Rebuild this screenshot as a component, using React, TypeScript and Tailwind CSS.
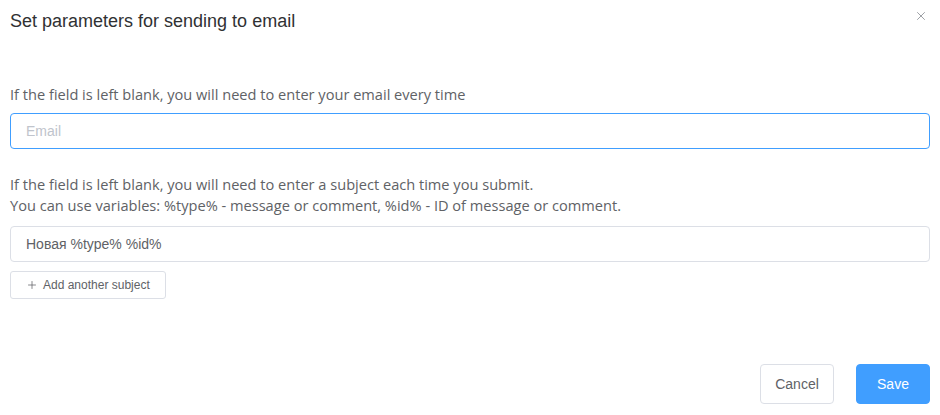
import { X, Plus } from 'lucide-react'

export default function App() {
  return (
    <div className="h-[415px] w-[940px] bg-white font-['Liberation_Sans',Arial,sans-serif]">
      <div className="flex items-start justify-between pl-[10px] pr-[12px] pt-[9px]">
        <h2 className="text-[18px] leading-[24px] text-[#303133]">Set parameters for sending to email</h2>
        <button className="text-[#909399]">
          <X size={14} strokeWidth={1.5} />
        </button>
      </div>

      <div className="px-[10px] pt-[51px]">
        <p className="font-['Open_Sans',sans-serif] text-[14.6px] leading-[20px] text-[#606266]">
          If the field is left blank, you will need to enter your email every time
        </p>
        <input
          className="mt-[9px] h-[36px] w-full rounded-[4px] border border-[#409eff] px-[15px] text-[14px] text-[#606266] outline-none placeholder:text-[#c0c4cc]"
          placeholder="Email"
        />

        <p className="mt-[25px] font-['Open_Sans',sans-serif] text-[14.6px] leading-[21px] text-[#606266]">
          If the field is left blank, you will need to enter a subject each time you submit.
          <br />
          You can use variables: %type% - message or comment, %id% - ID of message or comment.
        </p>
        <input
          className="mt-[10px] h-[36px] w-full rounded-[4px] border border-[#dcdfe6] px-[15px] text-[14px] text-[#606266] outline-none"
          defaultValue="Новая %type% %id%"
        />
        <button className="mt-[9px] flex h-[28px] items-center gap-[5px] rounded-[3px] border border-[#dcdfe6] px-[15px] text-[12px] text-[#606266]">
          <Plus size={12} strokeWidth={1.5} />
          Add another subject
        </button>
      </div>

      <div className="flex justify-end gap-[22px] px-[10px] pt-[65px]">
        <button className="h-[40px] w-[74px] rounded-[4px] border border-[#dcdfe6] text-[14px] text-[#606266]">
          Cancel
        </button>
        <button className="h-[40px] w-[74px] rounded-[4px] border border-[#409eff] bg-[#409eff] text-[14px] text-white">
          Save
        </button>
      </div>
    </div>
  )
}
